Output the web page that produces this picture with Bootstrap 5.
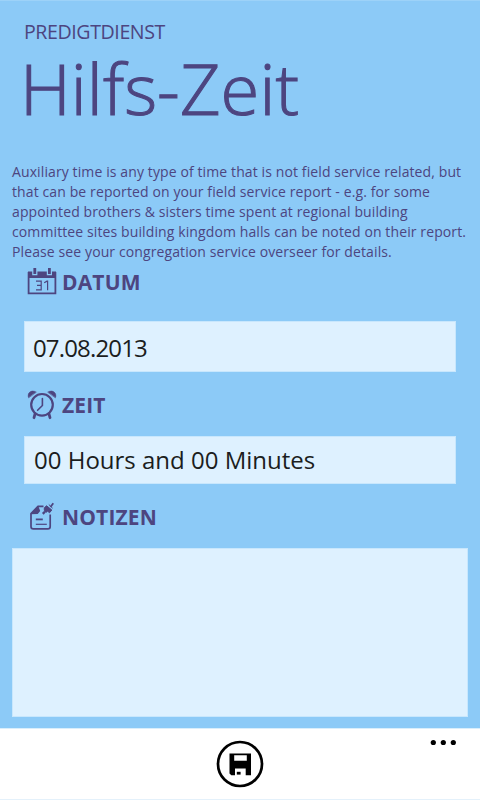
<!DOCTYPE html>
<html lang="de">
<head>
<meta charset="utf-8">
<meta name="viewport" content="width=device-width, initial-scale=1">
<title>Hilfs-Zeit</title>
<link href="https://cdn.jsdelivr.net/npm/bootstrap@5.3.0/dist/css/bootstrap.min.css" rel="stylesheet">
<style>
:root{--ink:#4d4580;--sky:#8ccaf7;--field:#def1ff;--edge:#c8e7fd}
body{font-family:"Open Sans","Noto Sans",sans-serif;background:var(--sky);color:var(--ink)}
.phone{width:480px;height:800px;background:var(--sky);border-top:1px solid #9dd2f8}
.app-name{font-size:19.6px;line-height:24px;margin:19px 0 0 24px;letter-spacing:-.42px}
.page-title{font-size:70.5px;line-height:72px;font-weight:300;margin:8px 0 0 20px;letter-spacing:.1px;-webkit-text-stroke:1.1px var(--ink)}
.intro{font-size:14px;line-height:20px;margin:38px 0 0 12px;letter-spacing:.11px}
.intro span{display:block;white-space:nowrap}
.field-head{height:30px;padding-left:27px;font-size:21px;font-weight:700;line-height:30px;letter-spacing:.15px}
.field-head svg{width:30px;height:30px;margin-right:5px}
.head-date{margin-top:5px}
.head-time{margin-top:18px}
.head-notes{margin-top:18px}
.entry{margin:0 24px;background:var(--field);border:1px solid var(--edge);color:#1b1d20;font-size:24px;line-height:1;padding:0 8px;white-space:nowrap}
.entry-date{height:51px;margin-top:24px;letter-spacing:-.85px;padding-top:2px}
.entry-time{height:48px;margin-top:16px;padding-left:9px}
.notes-box{margin:16px 12px 0;width:456px;height:169px;background:var(--field);border:1px solid var(--edge);resize:none}
.app-bar{height:72px;border-top:1px solid #d9eefc;border-bottom:1px solid #e4f1fb}
.more{top:10px;right:23px}
</style>
</head>
<body class="m-0">
<main class="phone d-flex flex-column overflow-hidden">
  <div class="app-name">PREDIGTDIENST</div>
  <h1 class="page-title">Hilfs-Zeit</h1>
  <p class="intro mb-0"><span>Auxiliary time is any type of time that is not field service related, but</span><span>that can be reported on your field service report - e.g. for some</span><span>appointed brothers &amp; sisters time spent at regional building</span><span>committee sites building kingdom halls can be noted on their report.</span><span>Please see your congregation service overseer for details.</span></p>

  <div class="field-head head-date d-flex align-items-center">
    <svg viewBox="0 0 30 30" fill="none" stroke="#4d4580">
      <path d="M1.6 5v21.400h26.800V5" stroke-width="1.800"/>
      <path d="M1 4.500h4.200v3.700h5.200V4.500h9.400v3.700H25V4.500h4V11H1z" fill="#4d4580" stroke="none"/>
      <path d="M7.800 1v6M22.400 1v6" stroke-width="2.800"/>
      <path d="M9 14.200h5.200v8.600H9M10 18.400h4.200M17.200 15.800l2.800-1.600h.6v9" stroke-width="1.200"/>
    </svg>
    <span>DATUM</span>
  </div>
  <div class="entry entry-date d-flex align-items-center"><span>07.08.2013</span></div>

  <div class="field-head head-time d-flex align-items-center">
    <svg viewBox="0 0 30 30" fill="none" stroke="#4d4580" stroke-linecap="round">
      <circle cx="15" cy="14.800" r="10.800" stroke-width="2.200"/>
      <path d="M15.400 8.500v7l-4.800 4.800" stroke-width="1.600"/>
      <path d="M8 24l-1 3.700M22 24l1 3.700" stroke-width="2.800"/>
      <path d="M1.500 7.500C-.2 3.500 4 -1 9 2zM28.500 7.500C30.200 3.500 26 -1 21 2z" fill="#4d4580" stroke-width=".6"/>
    </svg>
    <span>ZEIT</span>
  </div>
  <div class="entry entry-time d-flex align-items-center"><span>00 Hours and 00 Minutes</span></div>

  <div class="field-head head-notes d-flex align-items-center">
    <svg viewBox="0 0 30 30" fill="none" stroke="#4d4580">
      <path d="M16.500 4.300H11L4 11.700v12.800q0 2.400 2.400 2.400h14.400q2.400 0 2.400-2.400V12.500" stroke-width="1.700"/>
      <path d="M3.500 12.200L11.200 3.800l2 5.200-2.500 3z" fill="#4d4580" stroke="none"/>
      <path d="M8.800 17.400h7" stroke-width="1.800"/><path d="M8.800 22.300h11" stroke-width="1.200"/>
      <path d="M17.300 5.800l2.300-2 5.200 4.200-2.300 2.800-1.800-1.600-1.400 1-2-1.800zM21.800 2.500l3.800 3.700" fill="#4d4580" stroke-width="1"/>
      <path d="M23.500 5l2.800-3.800" stroke-width="1.800"/><path d="M15.800 11.800l2.300-2.300" stroke-width="2.400"/>
    </svg>
    <span>NOTIZEN</span>
  </div>
  <textarea class="notes-box d-block rounded-0" aria-label="Notizen"></textarea>

  <footer class="app-bar bg-white mt-auto position-relative d-flex justify-content-center align-items-center">
    <svg width="48" height="48" viewBox="0 0 48 48">
      <circle cx="24" cy="24" r="22" fill="none" stroke="#000" stroke-width="2.700"/>
      <path fill="#000" fill-rule="evenodd" d="M13.500 13.500H35v21.800H15.300l-1.800-1.800zM18.200 15.200v5.600h12.600v-5.600zM19 28.500v6.800h10.700v-6.800z"/>
      <path fill="#000" d="M20.800 31.800h3.800v2.800h-3.800z"/>
    </svg>
    <svg class="more position-absolute" width="28" height="7" viewBox="0 0 28 7"><circle cx="4.300" cy="3.500" r="2.600"/><circle cx="14.300" cy="3.500" r="2.600"/><circle cx="24.300" cy="3.500" r="2.600"/></svg>
  </footer>
</main>
<script src="https://cdn.jsdelivr.net/npm/bootstrap@5.3.0/dist/js/bootstrap.bundle.min.js"></script>
</body>
</html>
